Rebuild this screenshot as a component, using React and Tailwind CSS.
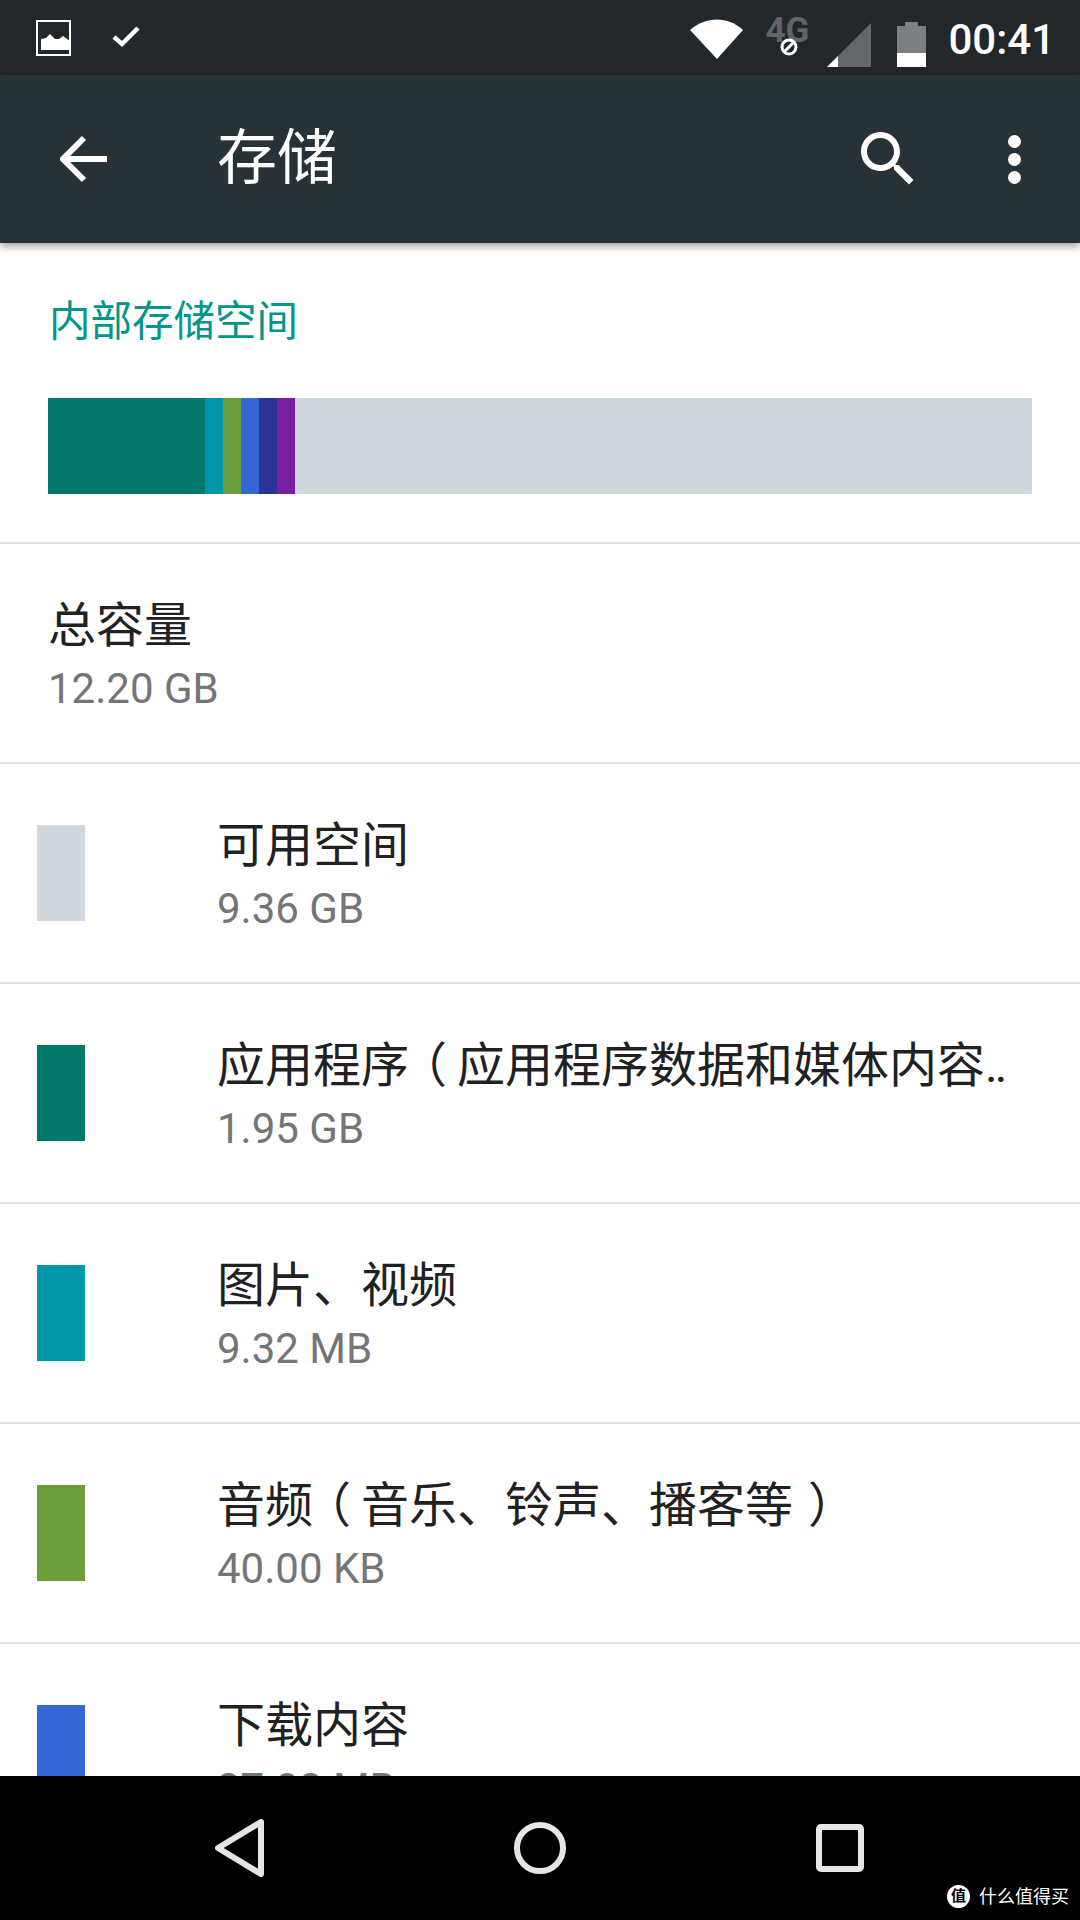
const segments = [
  { color: 'bg-[#02796b]', width: 'w-[157px]' },
  { color: 'bg-[#0097a8]', width: 'w-[18px]' },
  { color: 'bg-[#699e3a]', width: 'w-[18px]' },
  { color: 'bg-[#3367d6]', width: 'w-[18px]' },
  { color: 'bg-[#283593]', width: 'w-[18px]' },
  { color: 'bg-[#7b1fa2]', width: 'w-[18px]' },
  { color: 'bg-[#cfd8dc]', width: 'flex-1' },
];

// fullwidth parens sit centred in their box on the device
const Open = () => <span className="inline-block ml-[14px] mr-[10px] [font-feature-settings:'halt']">（</span>;
const Close = () => <span className="inline-block ml-[15px] mr-[9px] [font-feature-settings:'halt']">）</span>;

const rows = [
  { color: 'bg-[#cfd8dc]', title: '可用空间', size: '9.36 GB' },
  { color: 'bg-[#02796b]', title: <>应用程序<Open />应用程序数据和媒体内容<span className="tracking-[-3px]">..</span></>, size: '1.95 GB' },
  { color: 'bg-[#0097a8]', title: '图片、视频', size: '9.32 MB' },
  { color: 'bg-[#699e3a]', title: <>音频<Open />音乐、铃声、播客等<Close /></>, size: '40.00 KB' },
  { color: 'bg-[#3367d6]', title: '下载内容', size: '37.02 MB' },
];

function StatusBar() {
  return (
    <div className="h-[75px] bg-[#21272b] flex items-center text-white shrink-0">
      <svg width="36" height="36" viewBox="0 0 36 36" className="ml-[36px]">
        <rect x="1" y="1" width="33" height="34" fill="none" stroke="#fff" strokeWidth="2" />
        <path d="M5 30V19l5-1 4-4 5 5 4 0 4-3 4 3 3 2v9z" fill="#fff" />
      </svg>
      <svg width="32" height="28" viewBox="0 0 32 28" className="ml-[38px]">
        <path d="M4 13l8 7L28 4" fill="none" stroke="#fff" strokeWidth="4.5" />
      </svg>
      <svg width="54" height="42" viewBox="0 0 54 42" className="ml-auto">
        <path d="M0 12C16-2 38-2 53 12L27 41z" fill="#fff" transform="translate(0 1)" />
      </svg>
      <div className="relative w-[52px] h-[40px] ml-[21px] mb-[6px]">
        <span className="absolute left-0 top-[-4px] font-['Roboto',sans-serif] font-bold text-[35px] leading-[40px] text-[#5f6468]">4G</span>
        <svg width="20" height="20" viewBox="0 0 20 20" className="absolute left-[14px] top-[22px]">
          <circle cx="10" cy="10" r="7" fill="#21272b" stroke="#fff" strokeWidth="3" />
          <path d="M5 15L15 5" stroke="#fff" strokeWidth="3" />
        </svg>
      </div>
      <svg width="45" height="46" viewBox="0 0 45 46" className="ml-[10px] mt-[14px]">
        <path d="M0 45L44 1v44z" fill="#63686b" />
        <path d="M0 45L11 34v11z" fill="#fff" />
      </svg>
      <svg width="29" height="45" viewBox="0 0 29 45" className="ml-[25px] mt-[14px]">
        <path d="M0 4h8V0h13v4h8v41H0z" fill="#7c8082" />
        <rect y="31" width="29" height="14" fill="#fff" />
      </svg>
      <span className="ml-[22px] mr-[25px] mt-[4px] font-['Roboto',sans-serif] font-medium text-[42px] leading-none">00:41</span>
    </div>
  );
}

function AppBar() {
  return (
    <div className="relative z-10 h-[168px] bg-[#263238] flex items-center text-white shrink-0 shadow-[0_3px_8px_rgba(0,0,0,0.4)]">
      <svg width="48" height="48" viewBox="0 0 48 48" className="ml-[60px]">
        <path d="M47 24H5M24 3L3 24l21 21" fill="none" stroke="#fff" strokeWidth="6" />
      </svg>
      <span className="ml-[109px] text-[60px] leading-none">存储</span>
      <svg width="72" height="72" viewBox="0 0 24 24" fill="#fff" className="ml-auto">
        <path d="M15.5 14h-.79l-.28-.27C15.41 12.59 16 11.11 16 9.5 16 5.91 13.09 3 9.5 3S3 5.91 3 9.5 5.91 16 9.5 16c1.61 0 3.09-.59 4.23-1.57l.27.28v.79l5 4.99L20.49 19l-4.99-5zm-6 0C7.01 14 5 11.99 5 9.5S7.01 5 9.5 5 14 7.01 14 9.5 11.99 14 9.5 14z" />
      </svg>
      <div className="flex flex-col gap-[5px] ml-[84px] mr-[59px]">
        <div className="w-[13px] h-[13px] rounded-full bg-white" />
        <div className="w-[13px] h-[13px] rounded-full bg-white" />
        <div className="w-[13px] h-[13px] rounded-full bg-white" />
      </div>
    </div>
  );
}

function StorageRow({ color, title, size }) {
  return (
    <div className="h-[220px] flex items-start border-b-2 border-[#e0e0e0] shrink-0">
      <div className={`w-[48px] h-[96px] ml-[37px] mt-[61px] shrink-0 ${color}`} />
      <div className="ml-[133px] mt-[52px] min-w-0">
        <div className="-ml-[1px] text-[48px] leading-[60px] text-[#212121] whitespace-nowrap">{title}</div>
        <div className="-ml-[1px] text-[42px] leading-[50px] mt-[8px] text-[#757575]">{size}</div>
      </div>
    </div>
  );
}

export default function App() {
  return (
    <div className="w-[1080px] h-[1920px] flex flex-col overflow-hidden bg-white font-['Roboto','Noto_Sans_CJK_SC',sans-serif]">
      <StatusBar />
      <AppBar />
      <div className="flex-1 min-h-0 overflow-hidden flex flex-col">
        <div className="h-[301px] border-b-2 border-[#e0e0e0] shrink-0 pt-[50px]">
          <div className="ml-[49px] text-[41.5px] leading-[58px] text-[#009688]">内部存储空间</div>
          <div className="mx-[48px] mt-[47px] h-[96px] flex">
            {segments.map((s, i) => (
              <div key={i} className={`${s.color} ${s.width}`} />
            ))}
          </div>
        </div>
        <div className="h-[220px] border-b-2 border-[#e0e0e0] shrink-0 pl-[48px] pt-[52px]">
          <div className="text-[48px] leading-[60px] text-[#212121]">总容量</div>
          <div className="text-[42px] leading-[50px] mt-[8px] text-[#757575]">12.20 GB</div>
        </div>
        {rows.map((r) => (
          <StorageRow key={r.size} {...r} />
        ))}
      </div>
      <div className="relative h-[144px] bg-black flex items-center shrink-0">
        <svg width="50" height="58" viewBox="0 0 50 58" className="ml-[215px]">
          <path d="M46 3L3 29l43 26z" fill="none" stroke="#e6e6e6" strokeWidth="6" strokeLinejoin="round" />
        </svg>
        <svg width="52" height="52" viewBox="0 0 52 52" className="ml-[249px]">
          <circle cx="26" cy="26" r="23" fill="none" stroke="#e6e6e6" strokeWidth="6" />
        </svg>
        <svg width="48" height="48" viewBox="0 0 48 48" className="ml-[250px]">
          <rect x="3" y="3" width="42" height="42" rx="2" fill="none" stroke="#e6e6e6" strokeWidth="6" />
        </svg>
        <div className="absolute right-[11px] bottom-[12px] flex items-center gap-[9px] text-white">
          <span className="w-[23px] h-[23px] rounded-full bg-white text-black text-[15px] leading-[23px] text-center font-bold">值</span>
          <span className="text-[18px] leading-none">什么值得买</span>
        </div>
      </div>
    </div>
  );
}
